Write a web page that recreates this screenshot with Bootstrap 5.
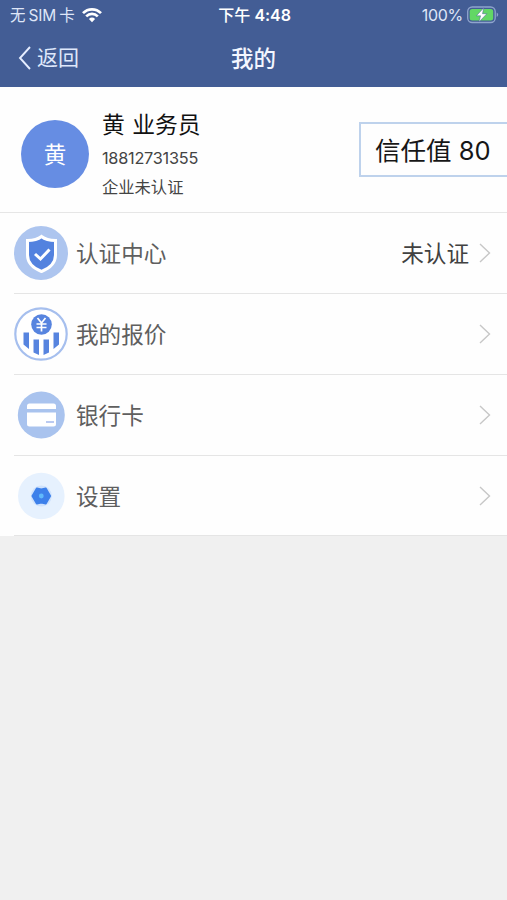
<!DOCTYPE html>
<html lang="zh-CN">
<head>
<meta charset="utf-8">
<meta name="viewport" content="width=device-width, initial-scale=1">
<title>我的</title>
<link rel="stylesheet" href="https://cdn.jsdelivr.net/npm/bootstrap@5.3.0/dist/css/bootstrap.min.css">
<style>
body{background:#f0f0f0;font-family:Inter,"Noto Sans CJK SC",sans-serif;line-height:1;overflow:hidden}
svg{display:block;flex:none}
.topbar{background:#435d95;height:87px;color:#f3f6ff}
.status{height:30px;font-size:16px;padding:0 8px 0 10px;color:#dfe6f8}
.third{flex:1 1 0}
.sim{font-size:15.5px;letter-spacing:-.1px;padding-top:1px}
.carrier{margin:0 3px}
.wifi{margin-left:7px}
.percent{letter-spacing:-.3px}
.clock{font-weight:500}
.clock b{font-weight:600;letter-spacing:-.1px}
.titlebar{height:57px;padding:0 18px}
.back{font-size:21px;gap:6px;color:#dfe8fb}
.title{font-size:22.5px;font-weight:500;padding-top:1px}
.profile{height:126px;padding-left:21px;background:#fefefe;border-bottom:1px solid #e6e6e6}
.avatar{width:68px;height:68px;background:#668de3;color:#fff;font-size:22.5px;margin-top:9px;padding-top:3px}
.info{margin-left:13px;color:#444;font-size:16.3px;padding-top:12px}
.name{font-size:22.8px;color:#111;word-spacing:1px;margin-top:-2px}
.phone{letter-spacing:-.25px;font-size:16.3px;margin:13px 0}
.trust{width:148px;height:55px;border:2px solid #bed2ec;border-right:0;font-size:25.5px;color:#161616;padding:2px 0 0 14px}
.menu{background:#fefefe;padding-left:14px}
.entry{height:81px;border-bottom:1.5px solid #e5e5e5;padding-right:16px;font-size:22.6px;color:#5f5f5f}
.entry:last-child{height:80px}
.entry .label{margin-left:8px;padding-top:2px}
.entry:last-child .label{padding-top:3px}
.state{color:#414141;margin-right:10px;padding-top:2px}
</style>
<script src="https://cdn.jsdelivr.net/npm/bootstrap@5.3.0/dist/js/bootstrap.bundle.min.js"></script>
</head>
<body>
<header class="topbar">
  <div class="status d-flex align-items-center">
    <div class="third d-flex align-items-center"><span class="sim">无<span class="carrier">SIM</span>卡</span>
      <svg class="wifi" width="20" height="16" viewBox="0 0 20 16" fill="none" stroke="#fff" stroke-width="2.7"><path d="M1 6.1C6 1 14 1 19 6.1M4.2 9.4C7.5 6.1 12.5 6.1 15.8 9.4"/><path d="M10 15.2l-3.1-3.3q3.1-2.7 6.2 0z" fill="#fff" stroke="none"/></svg>
    </div>
    <div class="clock text-white">下午 <b>4:48</b></div>
    <div class="third d-flex align-items-center justify-content-end"><span class="percent">100%</span>
      <svg class="ms-1" width="32" height="18" viewBox="0 0 32 18"><rect x=".7" y="1" width="27.5" height="15.5" rx="4.5" fill="none" stroke="#8fa4cd" stroke-width="1.3"/><rect x="2.7" y="3" width="23.5" height="11.5" rx="2.5" fill="#62d765"/><path d="M29.7 6.5q3 2.2 0 4.5z" fill="#8fa4cd"/><path d="M16.8 1.8L9.4 9.8h4.2l-1.7 6.2 8-8.3h-4.4z" fill="#fff" stroke="#435d95" stroke-width=".5"/></svg>
    </div>
  </div>
  <nav class="titlebar d-flex align-items-center">
    <div class="third"><a class="back d-inline-flex align-items-center text-decoration-none" href="#"><svg width="13" height="24" viewBox="0 0 13 24" fill="none" stroke="#e5edff" stroke-width="1.9"><path d="M12 1L2 12l10 11"/></svg><span>返回</span></a></div>
    <div class="title">我的</div>
    <div class="third"></div>
  </nav>
</header>
<main>
  <section class="profile d-flex align-items-center">
    <div class="avatar rounded-circle d-flex align-items-center justify-content-center">黄</div>
    <div class="info d-flex flex-column"><span class="name">黄 业务员</span><span class="phone">18812731355</span><span class="company">企业未认证</span></div>
    <div class="trust ms-auto d-flex align-items-center">信任值 80</div>
  </section>
  <div class="menu">
    <div class="entry d-flex align-items-center">
      <svg width="54" height="54" viewBox="0 0 54 54"><circle cx="27" cy="27" r="27" fill="#adc5ef"/><path d="M27.5 10.5q5 4 14 4V29q0 11-14 16.500Q13.500 40 13.500 29V14.500q9 0 14-4z" fill="#5382df" stroke="#fff" stroke-width="3"/><path d="M21 28l5.500 5 9-9.500" fill="none" stroke="#fff" stroke-width="3"/></svg>
      <span class="label">认证中心</span><span class="state ms-auto">未认证</span>
      <svg class="arrow" width="12" height="20" viewBox="0 0 12 20" fill="none" stroke="#c7c7c7" stroke-width="1.4"><path d="M1 1l9.500 9L1 19"/></svg>
    </div>
    <div class="entry d-flex align-items-center">
      <svg width="54" height="54" viewBox="0 0 54 54"><circle cx="27" cy="27" r="25.700" fill="#fff" stroke="#a6bfee" stroke-width="2.200"/><circle cx="27.500" cy="17.500" r="10.300" fill="#5784df"/><path d="M23.500 11l4 5 4-5M27.500 16v8.500M22.500 17h10M22.500 20.500h10" fill="none" stroke="#fff" stroke-width="1.700"/><path d="M9.500 25.500H15V42l-5.500-4.500zM19.500 32.500H25v15.500l-5.500-2.500zM29.500 32.500H35v13l-5.500 2.500zM39.500 25.500H45v12L39.500 42z" fill="#5784df"/></svg>
      <span class="label">我的报价</span>
      <svg class="arrow ms-auto" width="12" height="20" viewBox="0 0 12 20" fill="none" stroke="#c7c7c7" stroke-width="1.4"><path d="M1 1l9.500 9L1 19"/></svg>
    </div>
    <div class="entry d-flex align-items-center">
      <svg width="54" height="54" viewBox="0 0 54 54"><circle cx="27.300" cy="27" r="23.500" fill="#a9c3ee"/><path d="M13 21v-3q0-2.500 2.500-2.500h24q2.500 0 2.500 2.500v3zM13 24.500h29v11.500q0 2.500-2.500 2.500h-24Q13 38.500 13 36z" fill="#fff"/><path d="M32 34h8" stroke="#a3b9ed" stroke-width="1.500"/></svg>
      <span class="label">银行卡</span>
      <svg class="arrow ms-auto" width="12" height="20" viewBox="0 0 12 20" fill="none" stroke="#c7c7c7" stroke-width="1.4"><path d="M1 1l9.500 9L1 19"/></svg>
    </div>
    <div class="entry d-flex align-items-center">
      <svg width="54" height="54" viewBox="0 0 54 54"><circle cx="27.300" cy="27" r="23.300" fill="#e6f1fe"/><circle cx="27.300" cy="27" r="10.500" fill="#cfe2fc"/><path d="M22.800 19.700l4.500.9 4.500-.9 4.200 7.300-4.200 7.300-4.500-.9-4.500.9-4.200-7.300z" fill="#3d80ea" stroke="#3d80ea" stroke-width="2.200" stroke-linejoin="round"/><circle cx="27.300" cy="27" r="2.400" fill="#60b9fb"/></svg>
      <span class="label">设置</span>
      <svg class="arrow ms-auto" width="12" height="20" viewBox="0 0 12 20" fill="none" stroke="#c7c7c7" stroke-width="1.4"><path d="M1 1l9.500 9L1 19"/></svg>
    </div>
  </div>
</main>
</body>
</html>
